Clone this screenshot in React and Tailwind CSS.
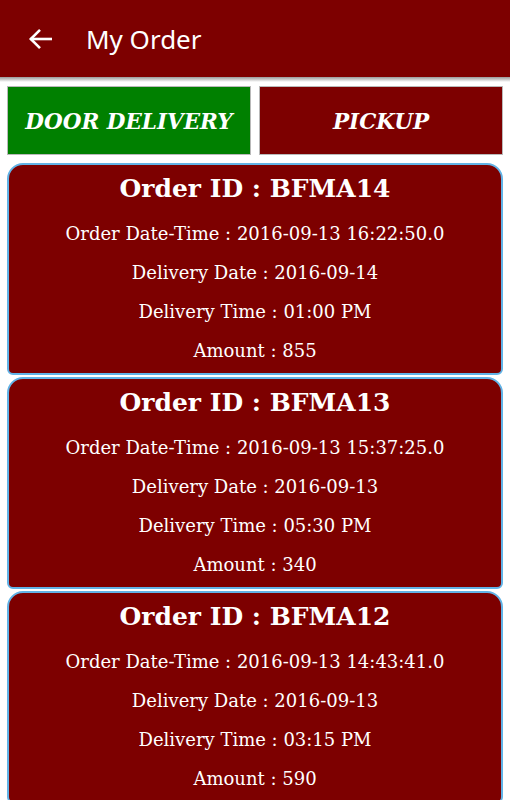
import React from "react";

const orders = [
  { id: "BFMA14", dt: "2016-09-13 16:22:50.0", dd: "2016-09-14", tm: "01:00 PM", amt: "855" },
  { id: "BFMA13", dt: "2016-09-13 15:37:25.0", dd: "2016-09-13", tm: "05:30 PM", amt: "340" },
  { id: "BFMA12", dt: "2016-09-13 14:43:41.0", dd: "2016-09-13", tm: "03:15 PM", amt: "590" },
];

const serif = { fontFamily: '"DejaVu Serif", "Liberation Serif", serif' };

export default function App() {
  return (
    <div className="w-[510px] h-[800px] overflow-hidden bg-white">
      <div className="relative h-[77px] bg-[#7d0000] flex items-center">
        <svg className="ml-[28px] mt-[1px]" width="24" height="22" viewBox="0 0 24 22" fill="none" stroke="white" strokeWidth="2.6" strokeLinecap="butt">
          <path d="M2.5 11H24" />
          <path d="M12 1.8L2.8 11L12 20.2" />
        </svg>
        <span className="ml-[34px] mt-[2px] text-white text-[26px]" style={{ fontFamily: '"Noto Sans", sans-serif' }}>
          My Order
        </span>
        <div className="absolute left-0 right-0 top-full h-[5px] bg-gradient-to-b from-[#9a9a9a] to-white" />
      </div>
      <div className="flex gap-[8px] px-[7px] pt-[9px]">
        <div className="flex-1 h-[69px] bg-[#008000] border border-[#b9b9b9] flex items-center justify-center">
          <span className="mt-[3px] text-white font-bold italic text-[21.5px]" style={serif}>DOOR DELIVERY</span>
        </div>
        <div className="flex-1 h-[69px] bg-[#7d0000] border border-[#b9b9b9] flex items-center justify-center">
          <span className="mt-[3px] text-white font-bold italic text-[21.5px]" style={serif}>PICKUP</span>
        </div>
      </div>
      <div className="flex flex-col gap-[2px] px-[7px] pt-[8px]">
        {orders.map((o) => (
          <div
            key={o.id}
            className="h-[212px] shrink-0 bg-[#7d0000] border-2 border-[#62b3e6] rounded-t-[16px] rounded-b-[6px] text-white text-center pt-[6px]"
            style={serif}
          >
            <div className="text-[25px] font-bold leading-[36px]">Order ID : {o.id}</div>
            <div className="mt-[7px] text-[18px] leading-[39px]">Order Date-Time : {o.dt}</div>
            <div className="text-[18px] leading-[39px]">Delivery Date : {o.dd}</div>
            <div className="text-[18px] leading-[39px]">Delivery Time : {o.tm}</div>
            <div className="text-[18px] leading-[39px]">Amount : {o.amt}</div>
          </div>
        ))}
      </div>
    </div>
  );
}
